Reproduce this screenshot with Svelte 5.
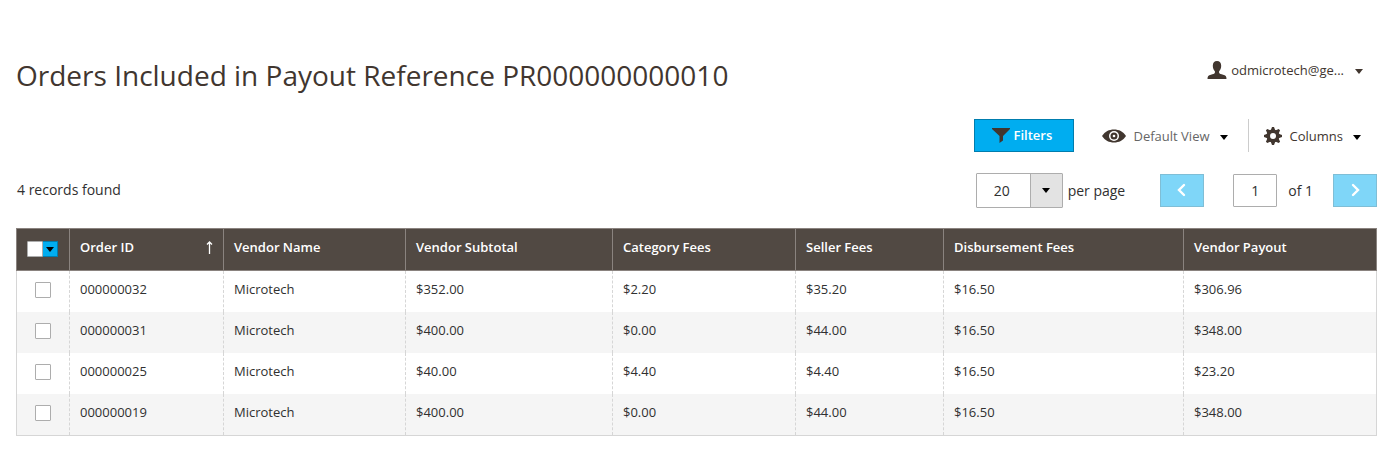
<script lang="ts">
  type Order = {
    id: string
    vendor: string
    subtotal: string
    categoryFees: string
    sellerFees: string
    disbursementFees: string
    payout: string
  }

  const columns: { key: keyof Order; label: string; width: number }[] = [
    { key: 'id', label: 'Order ID', width: 154 },
    { key: 'vendor', label: 'Vendor Name', width: 182 },
    { key: 'subtotal', label: 'Vendor Subtotal', width: 207 },
    { key: 'categoryFees', label: 'Category Fees', width: 183 },
    { key: 'sellerFees', label: 'Seller Fees', width: 148 },
    { key: 'disbursementFees', label: 'Disbursement Fees', width: 240 },
    { key: 'payout', label: 'Vendor Payout', width: 193 }
  ]

  const orders: Order[] = [
    { id: '000000032', vendor: 'Microtech', subtotal: '$352.00', categoryFees: '$2.20', sellerFees: '$35.20', disbursementFees: '$16.50', payout: '$306.96' },
    { id: '000000031', vendor: 'Microtech', subtotal: '$400.00', categoryFees: '$0.00', sellerFees: '$44.00', disbursementFees: '$16.50', payout: '$348.00' },
    { id: '000000025', vendor: 'Microtech', subtotal: '$40.00', categoryFees: '$4.40', sellerFees: '$4.40', disbursementFees: '$16.50', payout: '$23.20' },
    { id: '000000019', vendor: 'Microtech', subtotal: '$400.00', categoryFees: '$0.00', sellerFees: '$44.00', disbursementFees: '$16.50', payout: '$348.00' }
  ]

  let selected = $state<string[]>([])
  let perPage = $state('20')
  let page = $state('1')

  const allSelected = $derived(selected.length === orders.length)

  function toggleAll() {
    selected = allSelected ? [] : orders.map((o) => o.id)
  }
</script>

{#snippet caret()}
  <svg class="caret" width="8" height="5" viewBox="0 0 8 5" aria-hidden="true">
    <path d="M0 0h8L4 5z" fill="currentColor" />
  </svg>
{/snippet}

<main class="page">
  <header class="page-header">
    <h1>Orders Included in Payout Reference PR000000000010</h1>
    <button class="plain user">
      <svg width="20" height="18" viewBox="0 0 20 18" aria-hidden="true">
        <path fill="#41362f" d="M10 0C7.300 0 5.800 1.800 5.800 4.800c0 2.300.9 4.300 2.100 5.500v1.500c-.4 1.200-2 1.400-4 2C1.400 14.500.5 15.200.5 18h19c0-2.800-.9-3.500-3.400-4.200-2-.6-3.600-.8-4-2v-1.500c1.200-1.200 2.100-3.200 2.100-5.500C14.200 1.800 12.700 0 10 0z" />
      </svg>
      <span>odmicrotech@ge...</span>
      {@render caret()}
    </button>
  </header>

  <div class="toolbar">
    <button class="filters">
      <svg width="18" height="16" viewBox="0 0 18 16" aria-hidden="true">
        <path fill="#41362f" d="M0 1h18v1L11 9v4.500L7.500 16V9L0 2z" />
      </svg>
      <span>Filters</span>
    </button>
    <button class="plain view">
      <svg width="24" height="14" viewBox="0 0 24 14" aria-hidden="true">
        <path fill="#41362f" d="M0 7C3 2.500 7 .500 12 .500s9 2 12 6.500c-3 4.500-7 6.500-12 6.500S3 11.500 0 7z" />
        <circle cx="12" cy="7" r="5" fill="#fff" />
        <circle cx="12" cy="7" r="3.500" fill="#41362f" />
        <circle cx="12" cy="7" r="1.300" fill="#fff" />
      </svg>
      <span>Default View</span>
      {@render caret()}
    </button>
    <button class="plain columns">
      <svg width="18" height="18" viewBox="0 0 18 18" aria-hidden="true">
        <g fill="#41362f">
          {#each [0, 45, 90, 135] as angle}
            <path d="M8 0h2l1.500 4v10L10 18H8l-1.500-4V4z" transform="rotate({angle} 9 9)" />
          {/each}
          <circle cx="9" cy="9" r="6.500" />
        </g>
        <circle cx="9" cy="9" r="3" fill="#fff" />
      </svg>
      <span>Columns</span>
      {@render caret()}
    </button>
  </div>

  <div class="pager-row">
    <p class="records">4 records found</p>
    <div class="pager">
      <div class="select-wrap">
        <select id="per-page" bind:value={perPage}>
          <option>20</option>
          <option>30</option>
          <option>50</option>
          <option>100</option>
        </select>
        <span class="select-arrow">{@render caret()}</span>
      </div>
      <label class="per-page" for="per-page">per page</label>
      <button class="step" disabled aria-label="Previous page">
        <svg width="10" height="14" viewBox="0 0 10 14" aria-hidden="true">
          <path d="M7 2L2 7L7 12" />
        </svg>
      </button>
      <input id="page" class="page-input" type="text" bind:value={page} />
      <label class="page-total" for="page">of 1</label>
      <button class="step" disabled aria-label="Next page">
        <svg width="10" height="14" viewBox="0 0 10 14" aria-hidden="true">
          <path d="M3 2L8 7L3 12" />
        </svg>
      </button>
    </div>
  </div>

  <table>
    <colgroup>
      <col style="width: 53px" />
      {#each columns as column}
        <col style="width: {column.width}px" />
      {/each}
    </colgroup>
    <thead>
      <tr>
        <th class="check">
          <div class="multicheck">
            <input type="checkbox" aria-label="Select all" checked={allSelected} onchange={toggleAll} />
            <button aria-label="Selection options">{@render caret()}</button>
          </div>
        </th>
        {#each columns as column}
          <th>
            <div class="heading">
              {column.label}
              {#if column.key === 'id'}
                <svg width="7" height="13" viewBox="0 0 7 13" aria-hidden="true">
                  <path d="M3.500 1V13M1 3.500L3.500 1L6 3.500" fill="none" stroke="#fff" stroke-width="1.300" />
                </svg>
              {/if}
            </div>
          </th>
        {/each}
      </tr>
    </thead>
    <tbody>
      {#each orders as order (order.id)}
        <tr>
          <td class="check">
            <input type="checkbox" aria-label="Select order {order.id}" value={order.id} bind:group={selected} />
          </td>
          {#each columns as column}
            <td>{order[column.key]}</td>
          {/each}
        </tr>
      {/each}
    </tbody>
  </table>
</main>

<style>
  :global(body) {
    margin: 0;
    background: #fff;
  }

  .page {
    padding: 52px 17px 34px 16px;
    font-family: 'Open Sans', sans-serif;
    font-size: 14px;
    line-height: 20px;
    color: #303030;
  }

  button,
  input,
  select {
    font: inherit;
    color: inherit;
    margin: 0;
    box-sizing: border-box;
  }

  button {
    display: flex;
    align-items: center;
    cursor: pointer;
  }

  svg {
    display: block;
    flex-shrink: 0;
  }

  .page-header {
    display: flex;
    justify-content: space-between;
    align-items: flex-start;
  }

  h1 {
    margin: 0;
    font-size: 28px;
    font-weight: 400;
    line-height: 46px;
    color: #41362f;
  }

  .plain {
    padding: 0;
    border: 0;
    background: none;
    font-size: 13px;
  }

  .user {
    gap: 4px;
    margin: 8px 14px 0 0;
    color: #41362f;
  }

  .user .caret {
    margin: 2px 0 0 7px;
  }

  .toolbar {
    display: flex;
    justify-content: flex-end;
    margin-top: 21px;
    padding-right: 16px;
  }

  .filters {
    gap: 4px;
    width: 100px;
    height: 33px;
    margin-right: 28px;
    padding: 0 17px 1px;
    border: 1px solid #007dae;
    background: #00adf0;
    color: #fff;
    font-size: 13px;
    font-weight: 600;
  }

  .view {
    gap: 8px;
    padding: 0 20px 0 0;
    border-right: 1px solid #ccc;
    color: #666;
  }

  .columns {
    gap: 8px;
    padding-left: 15px;
    color: #41362f;
  }

  .view .caret,
  .columns .caret {
    margin: 3px 0 0 2px;
    color: #000;
  }

  .pager-row {
    display: flex;
    justify-content: space-between;
    align-items: center;
    margin-top: 21px;
  }

  .records {
    margin: 0;
    padding: 0 0 2px 1px;
  }

  .pager {
    display: flex;
    align-items: center;
  }

  .select-wrap {
    position: relative;
  }

  select {
    display: block;
    width: 87px;
    height: 35px;
    padding: 0 34px 0 17px;
    border: 1px solid #adadad;
    border-radius: 1px;
    background: #fff;
    appearance: none;
  }

  .select-arrow {
    position: absolute;
    top: 1px;
    right: 1px;
    bottom: 1px;
    display: flex;
    align-items: center;
    justify-content: center;
    width: 31px;
    border-left: 1px solid #adadad;
    background: #e3e3e3;
    color: #000;
    pointer-events: none;
  }

  .per-page {
    margin: 0 35px 0 5px;
  }

  .step {
    justify-content: center;
    width: 44px;
    height: 33px;
    padding: 0 0 2px;
    border: 1px solid #7fbed6;
    background: #7fd6f8;
  }

  .step path {
    fill: none;
    stroke: #fff;
    stroke-width: 2.4;
    stroke-linecap: round;
  }

  .page-input {
    width: 44px;
    height: 33px;
    margin-left: 29px;
    padding: 0;
    border: 1px solid #adadad;
    border-radius: 1px;
    text-align: center;
  }

  .page-total {
    margin: 0 20px 0 11px;
  }

  table {
    width: 100%;
    margin-top: 20px;
    border-collapse: collapse;
    table-layout: fixed;
    font-size: 13px;
    line-height: 18px;
  }

  th {
    height: 42px;
    padding: 9px 10px;
    box-sizing: border-box;
    border: 1px solid #8a837f;
    background: #514943;
    color: #fff;
    font-weight: 600;
    text-align: left;
    vertical-align: top;
  }

  td {
    height: 41px;
    padding: 9px 10px 13px;
    box-sizing: border-box;
    border-left: 1px dashed #d6d6d6;
    border-right: 1px dashed #d6d6d6;
    vertical-align: top;
  }

  td:first-child {
    border-left: 1px solid #d6d6d6;
  }

  td:last-child {
    border-right: 1px solid #d6d6d6;
  }

  tbody tr:last-child td {
    height: 42px;
    border-bottom: 1px solid #d6d6d6;
  }

  tbody tr:nth-child(even) {
    background: #f5f5f5;
  }

  .heading {
    display: flex;
    align-items: center;
    justify-content: space-between;
  }

  .check {
    padding: 11px 0 0;
  }

  th.check {
    padding: 12px 2px 0 0;
  }

  input[type='checkbox'] {
    display: block;
    width: 16px;
    height: 16px;
    margin: 0 auto;
    border: 1px solid #adadad;
    border-radius: 1px;
    background: #fff;
    appearance: none;
  }

  input[type='checkbox']:checked {
    background: #514943;
    box-shadow: inset 0 0 0 3px #fff;
  }

  .multicheck {
    display: flex;
    justify-content: center;
  }

  .multicheck input[type='checkbox'] {
    margin: 0;
  }

  .multicheck button {
    justify-content: center;
    width: 15px;
    height: 16px;
    padding: 0;
    border: 1px solid #007dae;
    border-left: 0;
    background: #00adf0;
    color: #000;
  }
</style>
